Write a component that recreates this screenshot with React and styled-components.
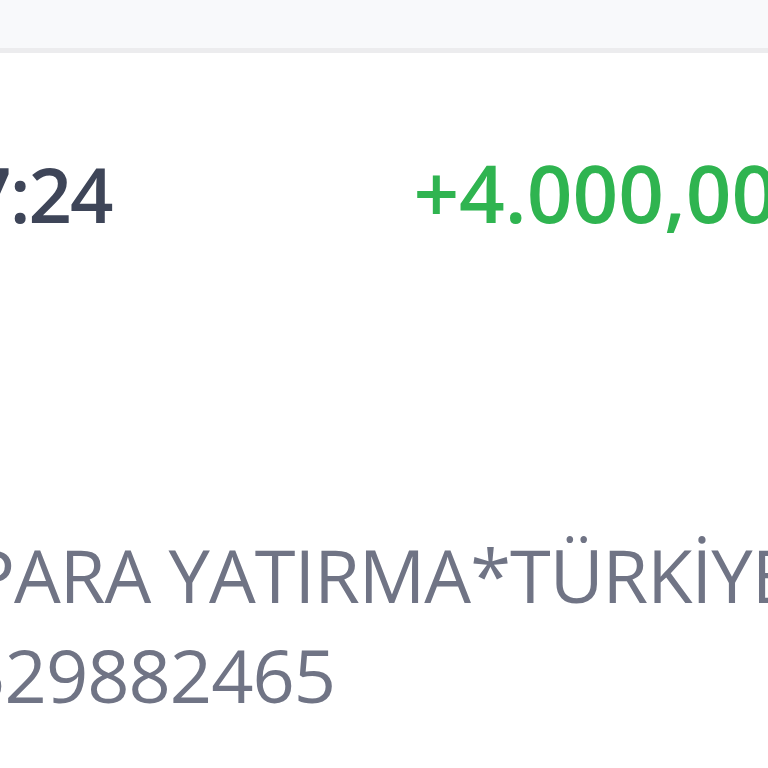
import React from "react"
import styled, { createGlobalStyle } from "styled-components"

const GlobalStyle = createGlobalStyle`
  html, body {
    margin: 0;
    padding: 0;
    background: #ffffff;
  }
  body {
    font-family: "Open Sans", "Noto Sans", sans-serif;
    overflow: hidden;
  }
`

const Screen = styled.div`
  width: 768px;
  height: 768px;
  overflow: hidden;
  display: flex;
  flex-direction: column;
  background: #ffffff;
`

const TopBar = styled.div`
  height: 48px;
  flex-shrink: 0;
  background: #f8f9fb;
  border-bottom: 5px solid #ececee;
`

const Row = styled.div`
  display: flex;
  align-items: baseline;
  white-space: nowrap;
  margin-top: ${props => props.top}px;
  margin-left: ${props => props.shift}px;
`

const Time = styled.span`
  font-size: 76px;
  font-weight: 600;
  color: #3e4558;
  letter-spacing: -2px;
`

const Amount = styled.span`
  margin-left: ${props => props.gap}px;
  font-size: 80px;
  font-weight: 600;
  color: #2fb450;
`

const Details = styled.div`
  display: flex;
  flex-direction: column;
  margin-top: ${props => props.top}px;
`

const Line = styled.div`
  white-space: nowrap;
  margin-left: ${props => props.shift}px;
  font-size: 74px;
  line-height: 100px;
  font-weight: 400;
  color: #707485;
  letter-spacing: -1px;
`

export default function App() {
  return (
    <Screen>
      <GlobalStyle />
      <TopBar />
      <Row top={84} shift={-175}>
        <Time>14:17:24</Time>
        <Amount gap={302}>+4.000,00 TL</Amount>
      </Row>
      <Details top={279}>
        <Line shift={-210}>FAST PARA YATIRMA*TÜRKİYE İŞ BANKASI</Line>
        <Line shift={-78}>5529882465</Line>
      </Details>
    </Screen>
  )
}
